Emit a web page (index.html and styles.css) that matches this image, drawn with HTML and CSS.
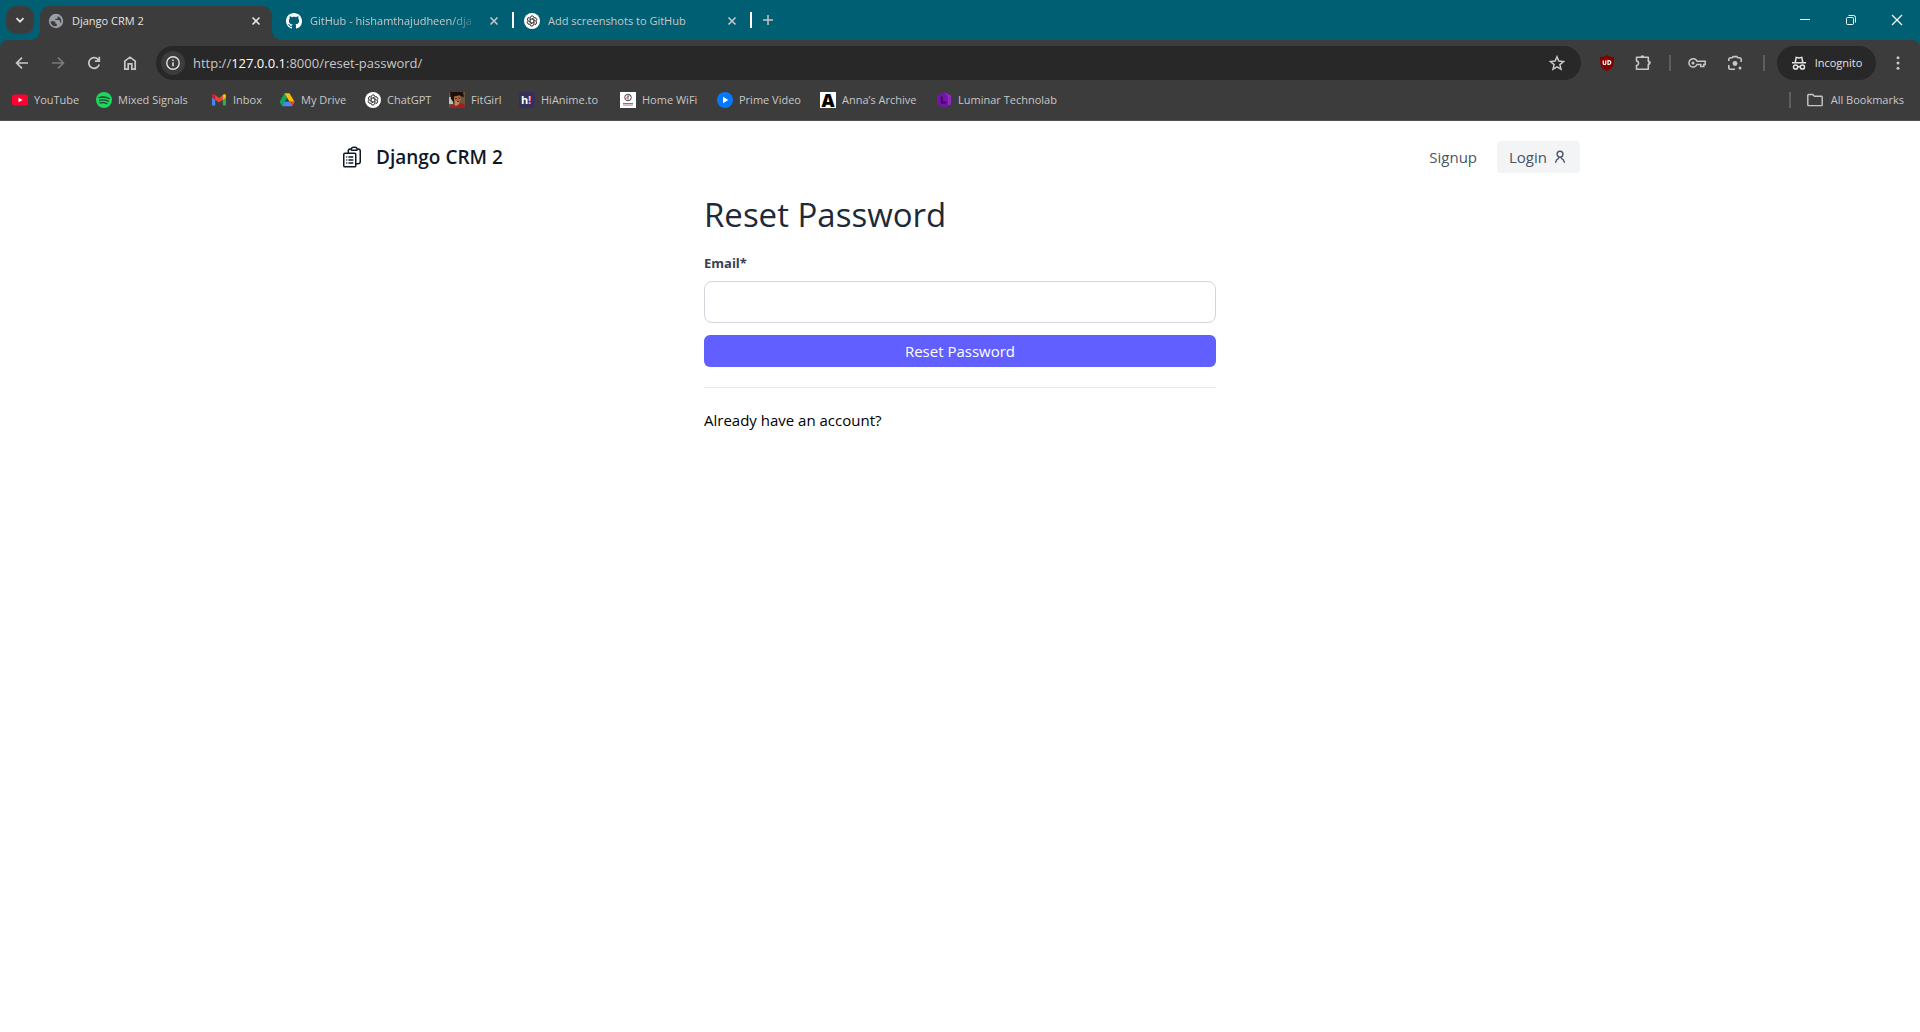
FILE: index.html
```
<!DOCTYPE html>
<html lang="en">
<head>
<meta charset="utf-8">
<title>Django CRM 2</title>
<link rel="stylesheet" href="styles.css">
</head>
<body>
<svg class="defs" aria-hidden="true">
  <symbol id="close" viewBox="0 0 16 16"><path d="M4.5 4.5l7 7M11.5 4.5l-7 7" fill="none" stroke="currentColor" stroke-width="1.6"/></symbol>
  <symbol id="knot" viewBox="0 0 16 16">
    <circle cx="8" cy="8" r="8" fill="#fff"/>
    <g fill="none" stroke="#333" stroke-width=".65">
      <path id="petal" d="M6.100 9.100V5.200a2.200 2.200 0 0 1 4-1.200M6.100 6.900l3.600-2.100a2.200 2.200 0 0 1 3.100 2.400"/>
      <use href="#petal" transform="rotate(60 8 8)"/><use href="#petal" transform="rotate(120 8 8)"/>
      <use href="#petal" transform="rotate(180 8 8)"/><use href="#petal" transform="rotate(240 8 8)"/>
      <use href="#petal" transform="rotate(300 8 8)"/>
    </g>
  </symbol>
</svg>

<header class="browser">
  <div class="tab-strip">
    <button class="tab-search" aria-label="Search tabs"><svg width="16" height="16" viewBox="0 0 16 16"><path d="M4.500 6.200L8 9.700l3.500-3.500" fill="none" stroke="currentColor" stroke-width="1.800"/></svg></button>
    <div class="tabs">
      <div class="tab active">
        <svg width="16" height="16" viewBox="0 0 16 16"><circle cx="8" cy="8" r="7.200" fill="#9aa0a6"/><path d="M2.600 8.200h3.200c1 0 1.700.7 1.700 1.600v1h1.300v2.300c-2.800 1-6.200-1-6.200-4.900zM7 3.300h2.600v1.500c0 .6-.5 1-1.100 1H7.300v1.300h3.800l1 1.200v1.500h1c.6-2.300-.2-5-2.300-6.100-1.200-.6-2.600-.7-3.800-.3z" fill="#3c3c3c"/></svg>
        <span class="tab-title">Django CRM 2</span>
        <button class="tab-close" aria-label="Close tab"><svg width="16" height="16"><use href="#close"/></svg></button>
      </div>
      <div class="tab">
        <svg width="16" height="16" viewBox="0 0 16 16"><path fill="#fff" d="M8 0C3.580 0 0 3.580 0 8c0 3.540 2.290 6.530 5.470 7.590.4.070.55-.17.55-.38 0-.19-.01-.82-.01-1.490-2.010.37-2.530-.49-2.690-.94-.09-.23-.48-.94-.82-1.130-.28-.15-.68-.52-.01-.53.63-.01 1.080.58 1.230.82.72 1.210 1.870.87 2.330.66.07-.52.28-.87.51-1.070-1.780-.2-3.640-.89-3.640-3.950 0-.87.31-1.590.82-2.150-.08-.2-.36-1.020.08-2.120 0 0 .67-.21 2.200.82.64-.18 1.320-.27 2-.27s1.360.09 2 .27c1.530-1.040 2.200-.82 2.200-.82.44 1.100.16 1.920.08 2.120.51.56.82 1.270.82 2.150 0 3.070-1.870 3.750-3.650 3.950.29.25.54.73.54 1.480 0 1.070-.01 1.930-.01 2.200 0 .21.15.46.55.38A8.010 8.010 0 0 0 16 8c0-4.420-3.580-8-8-8z"/></svg>
        <span class="tab-title fade">GitHub - hishamthajudheen/dja</span>
        <button class="tab-close" aria-label="Close tab"><svg width="16" height="16"><use href="#close"/></svg></button>
      </div>
      <div class="tab">
        <svg width="16" height="16"><use href="#knot"/></svg>
        <span class="tab-title">Add screenshots to GitHub</span>
        <button class="tab-close" aria-label="Close tab"><svg width="16" height="16"><use href="#close"/></svg></button>
      </div>
    </div>
    <button class="new-tab" aria-label="New tab"><svg width="16" height="16" viewBox="0 0 16 16"><path d="M8 3v10M3 8h10" stroke="currentColor" stroke-width="1.500"/></svg></button>
    <div class="window-controls">
      <button aria-label="Minimize"><svg width="12" height="12" viewBox="0 0 12 12"><path d="M1 5.500h10" stroke="#fff"/></svg></button>
      <button aria-label="Restore"><svg width="12" height="12" viewBox="0 0 12 12"><g fill="none" stroke="#fff"><rect x="1.500" y="3.500" width="7" height="7" rx="1"/><path d="M3.500 1.500h5a2 2 0 0 1 2 2v5"/></g></svg></button>
      <button aria-label="Close"><svg width="12" height="12" viewBox="0 0 12 12"><path d="M1 1l10 10M11 1L1 11" stroke="#fff" stroke-width="1.200"/></svg></button>
    </div>
  </div>

  <div class="toolbar">
    <nav class="history" aria-label="History">
      <button aria-label="Back"><svg width="20" height="20" viewBox="0 0 20 20"><path d="M16 10H5M10 4.600L4.600 10l5.400 5.400" fill="none" stroke="currentColor" stroke-width="1.700"/></svg></button>
      <button class="dim" aria-label="Forward"><svg width="20" height="20" viewBox="0 0 20 20"><path d="M4 10h11M10 4.600l5.400 5.400-5.400 5.400" fill="none" stroke="currentColor" stroke-width="1.700"/></svg></button>
      <button aria-label="Reload"><svg width="20" height="20" viewBox="0 0 20 20"><path d="M15.200 11.500A5.300 5.300 0 1 1 14 6.400l1.400 1.500M15.300 3.800v4.400h-4.400" fill="none" stroke="currentColor" stroke-width="1.700"/></svg></button>
      <button aria-label="Home"><svg width="20" height="20" viewBox="0 0 20 20"><path d="M4.800 16.200V8.200L10 4.200l5.200 4v8h-3.400v-5.400H8.200v5.400z" fill="none" stroke="currentColor" stroke-width="1.700"/></svg></button>
    </nav>
    <div class="omnibox">
      <button class="site-info" aria-label="Site information"><svg width="16" height="16" viewBox="0 0 16 16"><circle cx="8" cy="8" r="6.200" fill="none" stroke="currentColor" stroke-width="1.400"/><path d="M8 7.200v4M8 4.600v1.500" stroke="currentColor" stroke-width="1.500"/></svg></button>
      <div class="url">http://<b>127.0.0.1</b>:8000/reset-password/</div>
      <button class="star" aria-label="Bookmark this tab"><svg width="20" height="20" viewBox="0 0 20 20"><path d="M10 3.800l1.800 4.300 4.700.4-3.600 3.100 1.100 4.600-4-2.400-4 2.400 1.100-4.600-3.600-3.100 4.700-.4z" fill="none" stroke="currentColor" stroke-width="1.500"/></svg></button>
    </div>
    <div class="actions">
      <button aria-label="uBlock Origin"><svg width="16" height="16" viewBox="0 0 16 16"><path d="M8 0c2 1.500 4 2 7 2 0 8-.5 11-7 14C1.500 13 1 10 1 2c3 0 5-.5 7-2z" fill="#800000"/><path d="M4.200 5.600v2.600a1.300 1.300 0 0 0 2.600 0V5.600M9 5.600v3.900h.8a1.900 1.900 0 0 0 0-3.900z" fill="none" stroke="#fff" stroke-width="1.200"/></svg></button>
      <button aria-label="Extensions"><svg width="20" height="20" viewBox="0 0 20 20"><path d="M3.500 4.300h11.800v3.900c2.200 0 2.200 3.200 0 3.200v4.800H3.500v-3.700c2.800-.8 2.800-4 0-4.600z" fill="none" stroke="currentColor" stroke-width="1.600" stroke-linejoin="round"/><path d="M7.400 4.200a2 2 0 0 1 4 0zM15.300 7.800a2 2 0 0 1 0 4z" fill="currentColor"/></svg></button>
      <span class="rule"></span>
      <button aria-label="Passwords"><svg width="20" height="20" viewBox="0 0 20 20"><path d="M10 8.300h8.200v3.200h-1.400v2h-3v-2H10A4.200 4.200 0 1 1 10 8.300z" fill="none" stroke="currentColor" stroke-width="1.500"/><circle cx="6" cy="10" r="1.500" fill="currentColor"/></svg></button>
      <button class="lens" aria-label="Search with Lens"><svg width="20" height="20" viewBox="0 0 20 20"><path d="M3.800 8V6.500a1.700 1.700 0 0 1 1.700-1.700h1.700L8.200 3.600h3.600l1 1.200h1.700a1.700 1.700 0 0 1 1.700 1.700V9M3.800 12v2.500a1.700 1.700 0 0 0 1.700 1.700H10" fill="none" stroke="currentColor" stroke-width="1.600"/><circle cx="10" cy="10.500" r="2.400" fill="currentColor"/><circle cx="15" cy="15" r="1.500" fill="currentColor"/></svg></button>
      <span class="rule"></span>
      <button class="incognito"><svg width="16" height="16" viewBox="0 0 16 16"><g fill="none" stroke="currentColor" stroke-width="1.500"><path d="M1 7.700h14M4.200 7.500l1-5.200L8 3l2.800-.7 1 5.200"/><circle cx="4.600" cy="12" r="2.100"/><circle cx="11.400" cy="12" r="2.100"/><path d="M6.700 11.700h2.600"/></g></svg><span>Incognito</span></button>
      <button class="more" aria-label="Menu"><svg width="16" height="16" viewBox="0 0 16 16" fill="currentColor"><circle cx="8" cy="2.800" r="1.500"/><circle cx="8" cy="8" r="1.500"/><circle cx="8" cy="13.200" r="1.500"/></svg></button>
    </div>
  </div>

  <nav class="bookmarks" aria-label="Bookmarks">
    <div class="bookmark-list">
      <a href="#"><svg width="16" height="16" viewBox="0 0 16 16"><rect y="2.500" width="16" height="11" rx="2.500" fill="#ff0033"/><path d="M6.500 5.700L10.600 8l-4.100 2.300z" fill="#fff"/></svg>YouTube</a>
      <a href="#"><svg width="16" height="16" viewBox="0 0 16 16"><circle cx="8" cy="8" r="8" fill="#1ed760"/><path d="M3 5.600c3.500-1 7.200-.7 10.200.9M3.500 8.300c3-.8 6-.5 8.700.9M4 10.900c2.500-.6 4.900-.4 7.100.8" fill="none" stroke="#263a2c" stroke-width="1.300" stroke-linecap="round"/></svg>Mixed Signals</a>
      <a href="#"><svg width="16" height="16" viewBox="0 0 16 16"><path d="M1 4v9.500h3.200V6.300z" fill="#4285f4"/><path d="M15 4v9.500h-3.200V6.300z" fill="#34a853"/><path d="M1 4c0-1.500 1.600-2.200 2.800-1.300L8 5.900l4.200-3.200C13.400 1.800 15 2.500 15 4l-.1 1.500L8 10.500 1.100 5.500z" fill="#ea4335"/><path d="M11.800 3v5l3.200-2.400V4c0-1.600-1.800-2.200-3.200-1z" fill="#fbbc04"/><path d="M4.200 3v5L1 5.600V4c0-1.600 1.800-2.200 3.200-1z" fill="#c5221f"/></svg>Inbox</a>
      <a href="#"><svg width="16" height="16" viewBox="0 0 16 16"><path d="M5.500 1.300L.6 9.800l2.500 4.400 5-8.500z" fill="#0da960"/><path d="M5.500 1.300h5l5 8.500h-5z" fill="#ffba00"/><path d="M5.600 9.800h9.900l-2.500 4.400H3.100z" fill="#4688f4"/><path d="M10.500 9.800h5L13 14.200z" fill="#ea4335"/></svg>My Drive</a>
      <a href="#"><svg width="16" height="16"><use href="#knot"/></svg>ChatGPT</a>
      <a href="#"><svg width="16" height="16" viewBox="0 0 16 16"><path fill="#6b563c" d="M0 0h16v16H0z"/><path fill="#b5c4c6" d="M0 5h4v7H0z"/><path fill="#1d100b" d="M1 0h13l1 5-4-1-6 1v6L2 7z"/><path fill="#a8683f" d="M5 4.500l6-1.200 1 4L10 12H7L5 9z"/><path fill="#c08a62" d="M6 9h4v5H6z"/><path fill="#a81b20" d="M0 16l3-4 4 2 5-3 4 2v3z"/><path d="M6 6.500h2M9.500 6h1.500M8 9.500h2" stroke="#51271c"/></svg>FitGirl</a>
      <a href="#"><svg width="16" height="16" viewBox="0 0 16 16"><rect width="16" height="16" rx="3.500" fill="#35305b"/><text x="2" y="12" class="icon-letter" fill="#fff">h</text><text x="9" y="12" class="icon-letter" fill="#ffb8de">!</text></svg>HiAnime.to</a>
      <a href="#"><svg width="16" height="16" viewBox="0 0 16 16"><path fill="#fff" d="M0 0h16v16H0z"/><circle cx="8" cy="5.500" r="3.300" fill="none" stroke="#444"/><path d="M8 2v7" stroke="#299d77"/><path d="M6 6.500l3.500-3" stroke="#d9304e"/><path d="M3 11.700h10" stroke="#c1435c" stroke-width="1.200"/><path d="M3 13.300h10" stroke="#aaa4c8"/></svg>Home WiFi</a>
      <a href="#"><svg width="16" height="16" viewBox="0 0 16 16"><circle cx="8" cy="8" r="8" fill="#0578ff"/><path d="M6 4.800L11.300 8 6 11.200z" fill="#fff"/></svg>Prime Video</a>
      <a href="#"><svg class="archive" width="16" height="16" viewBox="0 0 16 16"><path fill="#fff" d="M0 0h16v16H0z"/><text x="8" y="15" class="icon-letter" text-anchor="middle">A</text></svg>Anna’s Archive</a>
      <a href="#"><svg width="16" height="16" viewBox="0 0 16 16"><path d="M8 0l7 3.800v8.400L8 16l-7-3.800V3.800z" fill="#7613a8"/><path d="M8 0l7 3.800v8.400l-3 1.600V5z" fill="#8a2cc0"/><path d="M5.700 4.500v6h4.600" fill="none" stroke="#3c0a58" stroke-width="1.800"/></svg>Luminar Technolab</a>
    </div>
    <span class="rule"></span>
    <a class="all-bookmarks" href="#"><svg width="16" height="16" viewBox="0 0 16 16"><path d="M.8 3.200a.7.7 0 0 1 .7-.7h4.200l1.700 1.700h7.100a.7.7 0 0 1 .7.700v8a.7.7 0 0 1-.7.7h-13a.7.7 0 0 1-.7-.7z" fill="none" stroke="currentColor" stroke-width="1.400"/></svg>All Bookmarks</a>
  </nav>
</header>

<div class="container">
  <header class="navbar">
    <a class="brand" href="#">
      <svg width="24" height="24" viewBox="0 0 24 24" fill="none" stroke="currentColor" stroke-width="1.500" stroke-linecap="round" stroke-linejoin="round"><path d="M9 12h3.750M9 15h3.750M9 18h3.750m3 .75H18a2.250 2.250 0 0 0 2.250-2.250V6.108c0-1.135-.845-2.098-1.976-2.192a48.424 48.424 0 0 0-1.123-.08m-5.801 0c-.065.21-.1.433-.1.664 0 .414.336.75.75.75h4.500a.75.75 0 0 0 .75-.75 2.250 2.250 0 0 0-.1-.664m-5.800 0A2.251 2.251 0 0 1 13.500 2.250H15c1.012 0 1.867.668 2.150 1.586m-5.800 0c-.376.023-.75.05-1.124.08C9.095 4.010 8.250 4.973 8.250 6.108V8.250m0 0H4.875c-.621 0-1.125.504-1.125 1.125v11.250c0 .621.504 1.125 1.125 1.125h9.750c.621 0 1.125-.504 1.125-1.125V9.375c0-.621-.504-1.125-1.125-1.125H8.250ZM6.750 12h.008v.008H6.750V12Zm0 3h.008v.008H6.750V15Zm0 3h.008v.008H6.750V18Z"/></svg>
      <span>Django CRM 2</span>
    </a>
    <nav class="links">
      <a href="#">Signup</a>
      <a class="login" href="#">Login <svg width="16" height="16" viewBox="0 0 16 16" fill="none" stroke="currentColor" stroke-width="1.400" stroke-linecap="round"><circle cx="8" cy="5.200" r="2.900"/><path d="M3.700 13.300c.1-1.800.8-2.800 2.600-3.700M12.300 13.300c-.1-1.800-.8-2.800-2.600-3.700M6.300 9.600L7 8.200M9.700 9.600L9 8.200"/></svg></a>
    </nav>
  </header>

  <main class="reset">
    <h1>Reset Password</h1>
    <form>
      <label for="email">Email*</label>
      <input id="email" type="email" name="email">
      <button class="submit" type="button">Reset Password</button>
    </form>
    <hr>
    <a class="have-account" href="#">Already have an account?</a>
  </main>
</div>
</body>
</html>
```
FILE: styles.css
```
* { box-sizing: border-box; }

body {
  margin: 0;
  background: #fff;
  color: #000;
  font: 15px/24px "Segoe UI", "Open Sans", "Noto Sans", sans-serif;
}

button {
  padding: 0;
  border: 0;
  background: none;
  color: inherit;
  font: inherit;
  cursor: pointer;
}

a { color: inherit; text-decoration: none; }
svg { flex: none; display: block; }
.defs { position: absolute; width: 0; height: 0; }

/* Browser frame */
.browser {
  background: #005f73;
  color: #c7c7c7;
  font-size: 11px;
  line-height: 16px;
}

.tab-strip {
  display: flex;
  align-items: center;
  height: 40px;
  padding-left: 6px;
}

.tab-search {
  display: grid;
  place-items: center;
  width: 28px;
  height: 28px;
  border-radius: 10px;
  background: #3c3c3c;
  color: #e3e3e3;
}

.tabs { display: flex; align-self: flex-end; margin-left: 6px; }

.tab {
  position: relative;
  display: flex;
  align-items: center;
  gap: 8px;
  width: 232px;
  height: 34px;
  margin-right: 6px;
  padding: 0 8px;
  padding-bottom: 5px;
}

.tab.active {
  border-radius: 10px 10px 0 0;
  background: #3c3c3c;
  color: #e3e3e3;
}

.tab.active::before,
.tab.active::after {
  content: "";
  position: absolute;
  bottom: 0;
  width: 10px;
  height: 10px;
}
.tab.active::before { right: 100%; background: radial-gradient(circle at 0 0, transparent 10px, #3c3c3c 10px); }
.tab.active::after { left: 100%; background: radial-gradient(circle at 100% 0, transparent 10px, #3c3c3c 10px); }

/* White divider after each inactive tab */
.tab:not(.active)::after {
  content: "";
  position: absolute;
  right: -4px;
  top: 6px;
  width: 2px;
  height: 16px;
  background: #fff;
}

.tab-title { flex: 1; overflow: hidden; white-space: nowrap; }
.tab-title.fade { mask-image: linear-gradient(to right, #000 84%, transparent); }
.new-tab { margin-left: 6px; }

.window-controls { display: flex; margin-left: auto; }
.window-controls button { display: grid; place-items: center; width: 46px; height: 40px; }

.toolbar {
  display: flex;
  align-items: center;
  height: 46px;
  padding: 0 12px 0 4px;
  border-radius: 8px 8px 0 0;
  background: #3c3c3c;
}
.toolbar button { display: grid; place-items: center; }

.history { display: flex; }
.history button { width: 36px; height: 36px; }
.history .dim { color: #7a7a7a; }

.omnibox {
  display: flex;
  flex: 1;
  align-items: center;
  height: 34px;
  margin-left: 8px;
  padding: 0 14px 0 5px;
  border-radius: 17px;
  background: #282828;
}
.omnibox .site-info {
  width: 24px;
  height: 24px;
  border-radius: 50%;
  background: #3c3c3c;
  color: #e3e3e3;
}
.url { flex: 1; padding-left: 8px; font-size: 13px; }
.url b { color: #fff; font-weight: 400; }

.actions { display: flex; align-items: center; margin-left: 8px; }
.actions button { width: 36px; height: 34px; }
.rule { width: 2px; height: 16px; background: #5e5e5e; }
.actions .rule { margin: 0 8px; }
.actions .lens { margin: 0 2px; }

.actions .incognito {
  display: flex;
  align-items: center;
  justify-content: center;
  gap: 8px;
  width: 99px;
  margin-left: 4px;
  border-radius: 17px;
  background: #282828;
  color: #e3e3e3;
}
.actions .more { width: 20px; margin-left: 12px; }

.bookmarks {
  display: flex;
  align-items: center;
  height: 35px;
  padding: 0 16px 6px 12px;
  border-bottom: 1px solid #505050;
  background: #3c3c3c;
}
.bookmark-list {
  display: grid;
  flex: 1;
  grid-template-columns: 84px 115px 68px 86px 84px 70px 101px 97px 103px 116px auto;
}
.bookmarks a { display: flex; align-items: center; gap: 6px; white-space: nowrap; }
.bookmarks .all-bookmarks { gap: 8px; margin-left: 16px; }

.icon-letter { font: 700 11px "Open Sans", sans-serif; }
.archive { overflow: visible; }
.archive .icon-letter { font-size: 18px; font-weight: 800; }

/* Page */
.container { max-width: 1240px; margin: 0 auto; }

.navbar {
  display: flex;
  align-items: center;
  justify-content: space-between;
  padding: 20px 0;
}
.brand {
  display: flex;
  align-items: center;
  gap: 12px;
  color: #101828;
  font-size: 19px;
  font-weight: 600;
}
.links { display: flex; align-items: center; gap: 20px; color: #4a5565; }
.login {
  display: flex;
  align-items: center;
  gap: 5px;
  padding: 4px 12px;
  border-radius: 4px;
  background: #f3f4f6;
}

.reset { max-width: 512px; margin: 0 auto; }
.reset h1 {
  margin: 0 0 16px;
  color: #1e2939;
  font-size: 33px;
  font-weight: 400;
  line-height: 44px;
}
.reset form { display: flex; flex-direction: column; }
.reset label {
  margin-bottom: 8px;
  color: #364153;
  font-size: 13px;
  font-weight: 700;
  line-height: 20px;
}
.reset input {
  height: 42px;
  margin-bottom: 12px;
  padding: 8px 16px;
  border: 1px solid #d1d5dc;
  border-radius: 8px;
  background: #fff;
  color: #364153;
  font: inherit;
}
.submit {
  height: 32px;
  border-radius: 6px;
  background: #615fff;
  color: #fff;
}
.reset hr { margin: 20px 0; border: 0; border-top: 1px solid #e5e7eb; }
.have-account { display: block; }
```
